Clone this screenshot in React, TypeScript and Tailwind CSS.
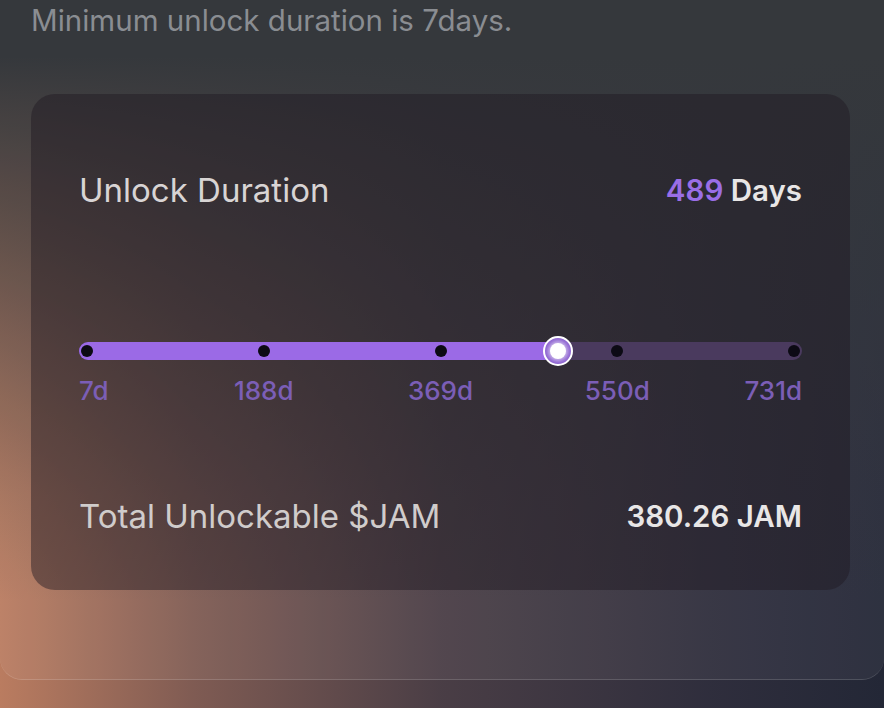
const TICKS = [
  { label: '7d', pos: 0 },
  { label: '188d', pos: 0.25 },
  { label: '369d', pos: 0.5 },
  { label: '550d', pos: 0.75 },
  { label: '731d', pos: 1 },
];

const MIN_DAYS = 7;
const MAX_DAYS = 731;
const VALUE = 489;

function DurationSlider() {
  const pct = ((VALUE - MIN_DAYS) / (MAX_DAYS - MIN_DAYS)) * 100;
  return (
    <div className="w-full">
      <div className="relative h-[18px] w-full rounded-full bg-[#4a3a5e]">
        <div className="absolute inset-y-0 left-0 rounded-full bg-[#9b6ae6]" style={{ width: `${pct}%` }} />
        {TICKS.map((t) => (
          <span
            key={t.label}
            className="absolute top-1/2 h-[12px] w-[12px] -translate-y-1/2 rounded-full bg-[#0c0a14]"
            style={{ left: `calc(${t.pos * 100}% + ${8 - t.pos * 16}px - 6px)` }}
          />
        ))}
        <span
          className="absolute top-1/2 flex h-[30px] w-[30px] -translate-x-1/2 -translate-y-1/2 items-center justify-center rounded-full border-2 border-white bg-[#8a5fd0]"
          style={{ left: `calc(${pct}% - 2px)` }}
        >
          <span className="h-[16px] w-[16px] rounded-full bg-white shadow-[0_0_4px_2px_rgba(255,255,255,0.6)]" />
        </span>
      </div>
      <div className="relative mt-[16px] h-[30px] text-[26px] font-medium leading-[30px] text-[#7b5eb6]">
        {TICKS.map((t, i) => (
          <span
            key={t.label}
            className={`absolute top-0 ${i === 0 ? 'left-0' : i === TICKS.length - 1 ? 'right-0' : '-translate-x-1/2'}`}
            style={i === 0 || i === TICKS.length - 1 ? undefined : { left: `calc(${t.pos * 100}% + ${8 - t.pos * 16}px)` }}
          >
            {t.label}
          </span>
        ))}
      </div>
    </div>
  );
}

export default function App() {
  return (
    <div className="relative h-[708px] w-[884px] overflow-hidden bg-[#232736] font-['Inter',sans-serif]">
      <div className="pointer-events-none absolute inset-0 bg-[linear-gradient(90deg,rgba(186,124,96,1)_0%,rgba(150,104,90,0.8)_22%,rgba(105,80,82,0.55)_50%,rgba(75,62,76,0.3)_80%,transparent_100%)]" />
      <div className="pointer-events-none absolute inset-0 bg-[linear-gradient(180deg,#2b2e32_0%,#2b2e32_8%,rgba(43,46,50,0.65)_35%,rgba(43,46,50,0.15)_70%,transparent_85%)]" />

      <div className="relative -mt-[20px] h-[700px] w-[884px] rounded-b-[22px] border-b border-white/15 bg-white/[0.05] px-[31px] pt-[20px]">
        <p className="text-[29.5px] leading-[40px] text-[#8a8d92]">Minimum unlock duration is 7days.</p>

        <div className="mt-[54px] flex h-[496px] w-[819px] flex-col rounded-[24px] bg-[#1e1822]/45 px-[48px]">
          <div className="mt-[76px] flex items-center justify-between">
            <span className="text-[33px] leading-[40px] text-[#d8d4d4]">Unlock Duration</span>
            <span className="text-[29.5px] font-semibold leading-[40px]">
              <span className="text-[#9a6ee6]">489</span>
              <span className="text-[#e8e6e6]"> Days</span>
            </span>
          </div>

          <div className="mt-[132px]">
            <DurationSlider />
          </div>

          <div className="mt-[90px] flex items-center justify-between">
            <span className="text-[33px] leading-[40px] text-[#d0cccb]">Total Unlockable $JAM</span>
            <span className="text-[29.5px] font-semibold leading-[40px] text-[#e8e6e6]">380.26 JAM</span>
          </div>
        </div>
      </div>
    </div>
  );
}
